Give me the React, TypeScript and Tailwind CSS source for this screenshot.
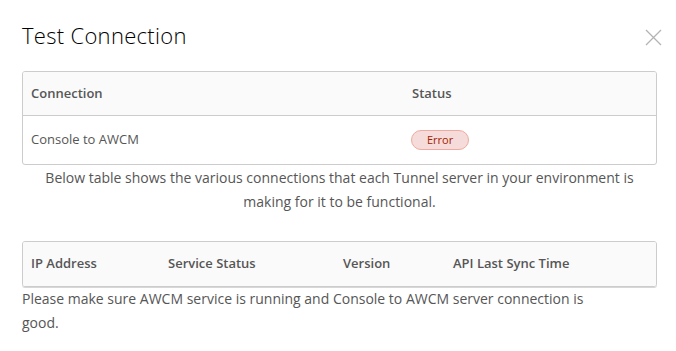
const font = { fontFamily: '"Open Sans", "Liberation Sans", sans-serif' };

export default function App() {
  return (
    <div className="w-[676px] h-[351px] bg-white overflow-hidden text-[#565656]" style={font}>
      <div className="relative pl-[22px] pr-[19px] pt-[21px]">
        <h3 className="text-[22px] leading-[28px] text-black font-light tracking-[0.3px]">Test Connection</h3>
        <button className="absolute right-[14px] top-[29px] text-[#b3b3b3]" aria-label="Close">
          <svg width="17" height="17" viewBox="0 0 17 17" fill="none" stroke="currentColor" strokeWidth="1.3">
            <path d="M1 1L16 16M16 1L1 16" />
          </svg>
        </button>

        {/* Connection table */}
        <div className="mt-[22px] border border-[#cccccc] rounded-[3px] overflow-hidden">
          <div className="flex h-[44px] items-center bg-[#fafafa] border-b border-[#cccccc] text-[13px] font-semibold">
            <div className="w-[388px] pl-[8px]">Connection</div>
            <div className="pl-[1px]">Status</div>
          </div>
          <div className="flex h-[48px] items-center text-[13px]">
            <div className="w-[388px] pl-[8px]">Console to AWCM</div>
            <div>
              <span className="inline-flex items-center h-[20px] px-[15px] rounded-full bg-[#f5dbd9] border border-[#f0a9a0] text-[#a32100] text-[11px]">
                Error
              </span>
            </div>
          </div>
        </div>

        <p className="mt-[1px] text-center text-[14px] leading-[24px] px-[10px]">
          Below table shows the various connections that each Tunnel server in your environment is making for it to be functional.
        </p>

        {/* Tunnel servers table */}
        <div className="mt-[27px] border border-[#cccccc] rounded-[3px] overflow-hidden shadow-[0_1px_0_#d7d7d7]">
          <div className="flex h-[44px] items-center bg-[#fafafa] text-[13px] font-semibold">
            <div className="w-[145px] pl-[8px]">IP Address</div>
            <div className="w-[175px]">Service Status</div>
            <div className="w-[110px]">Version</div>
            <div>API Last Sync Time</div>
          </div>
        </div>

        <p className="mt-[0px] text-[14px] leading-[24px] max-w-[585px]">
          Please make sure AWCM service is running and Console to AWCM server connection is good.
        </p>
      </div>
    </div>
  );
}
